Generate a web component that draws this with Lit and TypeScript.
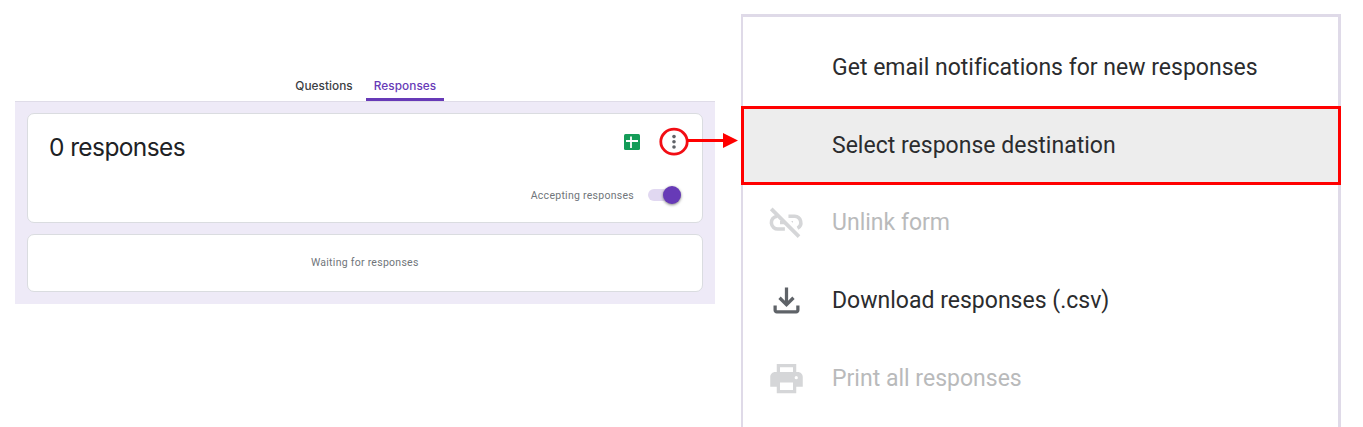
import { LitElement, html, css, svg } from "lit";
import { customElement } from "lit/decorators.js";

const unlinkIcon = svg`<path fill="none" stroke="currentColor" stroke-width="2.200" d="M13.200 8.200H17a3.900 3.900 0 0 1 1.800 7.300M11 16H7A3.950 3.950 0 0 1 6.300 8.100"/><path d="M8 11h3l2 2H8zM14.800 11H16v1.300z"/><path fill="none" stroke="currentColor" stroke-width="2.300" d="M2.600 3.600l17.100 17.100"/>`;
const downloadIcon = svg`<path d="M4 15h2v3h12v-3h2v3c0 1.100-.9 2-2 2H6c-1.100 0-2-.9-2-2zM15.590 9.590L13 12.170V4h-2v8.170L8.410 9.590 7 11l5 5 5-5z"/>`;
const printIcon = svg`<path fill-rule="evenodd" d="M6 3h12v5h1c1.660 0 3 1.340 3 3v6h-4v4H6v-4H2v-6c0-1.660 1.340-3 3-3h1zM8 5v3h8V5zM8 14.500V19h8v-4.500zM18 10.500a1 1 0 1 0 0 2 1 1 0 0 0 0-2z"/>`;

const items = [
  { label: "Get email notifications for new responses" },
  { label: "Select response destination", active: true },
  { label: "Unlink form", icon: unlinkIcon, disabled: true },
  { label: "Download responses (.csv)", icon: downloadIcon },
  { label: "Print all responses", icon: printIcon, disabled: true },
];

@customElement("forms-panel")
class FormsPanel extends LitElement {
  static styles = css`
    :host { display: block; width: 700px; font-family: Roboto, sans-serif; }
    .tabs { display: flex; height: 31px; padding-left: 270px; gap: 3px; box-sizing: border-box; }
    .tab { box-sizing: border-box; width: 78px; text-align: center; font: 500 11.800px/33px Inter, sans-serif; letter-spacing: .05px; color: #3c4043; white-space: nowrap; }
    .selected { color: #673ab7; height: 31px; border-bottom: 3px solid #673ab7; border-radius: 2px 2px 0 0; }
    .body { box-sizing: border-box; height: 203px; background: #eeeaf7; border-top: 1px solid #dfdce8; padding: 11px 12.500px 12px 12px; display: grid; grid-template-rows: 110px 58px; gap: 11px; }
    .card { box-sizing: border-box; background: #fff; border: 1px solid #dadce0; border-radius: 7px; }
    .summary { display: flex; flex-direction: column; }
    .head { display: flex; align-items: center; height: 56px; padding: 0 12.500px 0 21px; }
    .title { flex: 1; font: 24.500px/32px Inter, sans-serif; letter-spacing: -.6px; color: #202124; padding-top: 10px; }
    .sheet { margin-right: 19.500px; display: block; }
    .ring { display: block; }
    .accept { display: flex; align-items: center; justify-content: flex-end; height: 20px; margin-top: 15px; padding-right: 20.500px; gap: 14px; }
    .accept, .waiting { font-size: 10.500px; letter-spacing: .27px; color: #70757a; }
    .switch { width: 33px; height: 12px; border-radius: 6px; background: #e1d8f1; display: flex; align-items: center; justify-content: flex-end; }
    .knob { flex: none; width: 18px; height: 18px; border-radius: 50%; background: #673ab7; box-shadow: 0 1px 3px rgba(0,0,0,.5); }
    .waiting { display: flex; align-items: center; justify-content: center; padding-bottom: 2px; }
  `;
  render() {
    return html`
      <div class="tabs"><div class="tab">Questions</div><div class="tab selected">Responses</div></div>
      <div class="body">
        <div class="card summary">
          <div class="head">
            <div class="title">0 responses</div>
            <svg class="sheet" width="16" height="16" viewBox="0 0 16 16"><rect width="16" height="16" rx="1.500" fill="#149c58"/><path d="M2 7h12M7 2.500v11.500" stroke="#fff" stroke-width="1.800"/></svg>
            <svg class="ring" width="30" height="30" viewBox="0 0 30 30"><ellipse cx="15" cy="14.700" rx="13.200" ry="12.500" fill="none" stroke="#f20d14" stroke-width="2.800"/><g fill="#5f6368"><circle cx="15" cy="9.600" r="1.800"/><circle cx="15" cy="14.800" r="1.800"/><circle cx="15" cy="20" r="1.800"/></g></svg>
          </div>
          <div class="accept"><span>Accepting responses</span><div class="switch"><div class="knob"></div></div></div>
        </div>
        <div class="card waiting">Waiting for responses</div>
      </div>`;
  }
}

@customElement("forms-menu")
class FormsMenu extends LitElement {
  static styles = css`
    :host { display: block; box-sizing: border-box; width: 600px; height: 413px; border: solid #dfdae8; border-width: 3px 3px 0 2px; font: 23px Roboto, sans-serif; letter-spacing: .01px; }
    .item { box-sizing: border-box; display: flex; align-items: center; height: 77.700px; padding-left: 24px; gap: 26px; color: #2b2c2e; white-space: nowrap; }
    .item:first-child { height: 89px; padding-top: 11px; }
    .active { height: 79px; margin: 0 -3px -1px -2px; padding: 0 0 1px 23px; background: #ededed; border: 3px solid #f00; }
    .icon { flex: none; width: 39px; height: 39px; fill: currentColor; color: #5f6368; }
    .disabled { color: #b9babb; }
    .disabled .icon { color: #d5d6d8; }
  `;
  render() {
    return html`${items.map((i) => html`<div class="item ${i.active ? "active" : ""} ${i.disabled ? "disabled" : ""}"><svg class="icon" viewBox="0 0 24 24">${i.icon ?? ""}</svg><span>${i.label}</span></div>`)}`;
  }
}

@customElement("app-root")
class AppRoot extends LitElement {
  static styles = css`
    :host { display: block; position: relative; width: 1363px; height: 427px; overflow: hidden; background: #fff; }
    .layout { display: flex; align-items: flex-start; padding-left: 15px; gap: 26px; }
    forms-panel { margin-top: 70px; }
    forms-menu { margin-top: 14px; }
    .arrow { position: absolute; left: 687px; top: 132px; }
  `;
  render() {
    return html`<div class="layout"><forms-panel></forms-panel><forms-menu></forms-menu></div>
      <svg class="arrow" width="52" height="17" viewBox="0 0 52 17"><path d="M0 7h36V1l15 7.500L36 16v-6H0z" fill="#f00"/></svg>`;
  }
}
